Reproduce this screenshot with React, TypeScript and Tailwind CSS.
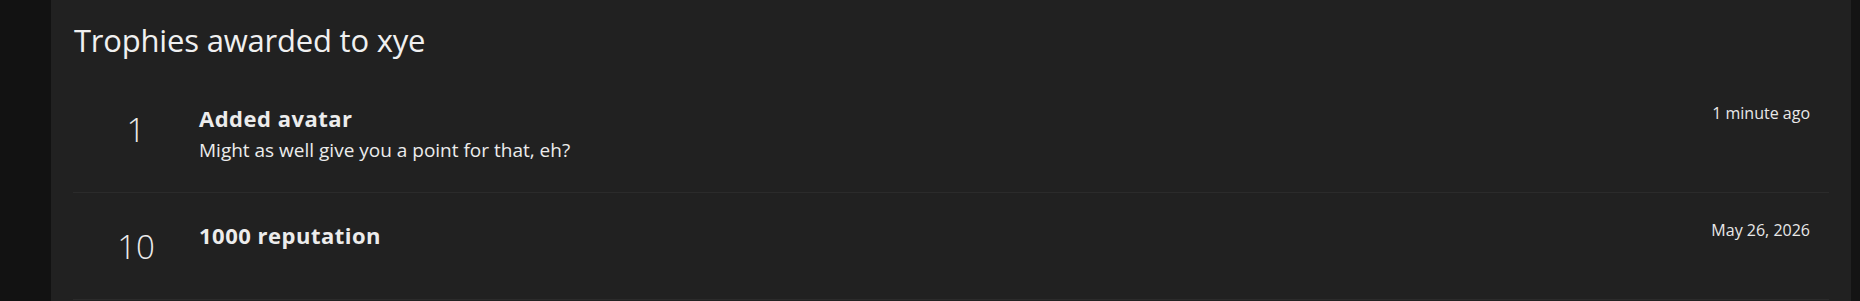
const trophies = [
  {
    points: 1,
    title: "Added avatar",
    description: "Might as well give you a point for that, eh?",
    date: "1 minute ago",
  },
  {
    points: 10,
    title: "1000 reputation",
    description: "",
    date: "May 26, 2026",
  },
];

export default function App() {
  return (
    <div className="flex h-[301px] w-full bg-[#131313] font-['Open_Sans',sans-serif] text-[#ececec] overflow-hidden">
      <div className="w-[51px] shrink-0 bg-[#121212]" />
      <main className="flex-1 bg-[#212121] px-[22px] pt-[20px]">
        <h1 className="text-[31px] leading-[40px] font-normal pl-[1px] tracking-[-0.2px] text-[#f0f0f0]">
          Trophies awarded to xye
        </h1>
        <ol className="mt-[16px]">
          {trophies.map((t) => (
            <li
              key={t.title}
              className="flex border-b border-[#2b2b2b] min-h-[107px]"
            >
              <div className="w-[126px] shrink-0 pt-[34px] text-center text-[33px] leading-[40px] font-light">
                {t.points}
              </div>
              <div className="flex-1 pt-[27px] pb-[29px]">
                <h3 className="text-[22px] leading-[30px] font-bold tracking-[0.5px]">
                  {t.title}
                </h3>
                {t.description && (
                  <p className="mt-[4px] text-[19px] leading-[26px]">{t.description}</p>
                )}
              </div>
              <div className="pt-[26px] pr-[19px] text-[16px] leading-[22px] text-[#e8e8e8]">
                {t.date}
              </div>
            </li>
          ))}
        </ol>
      </main>
      <div className="w-[9px] shrink-0 bg-[#141414]" />
    </div>
  );
}
